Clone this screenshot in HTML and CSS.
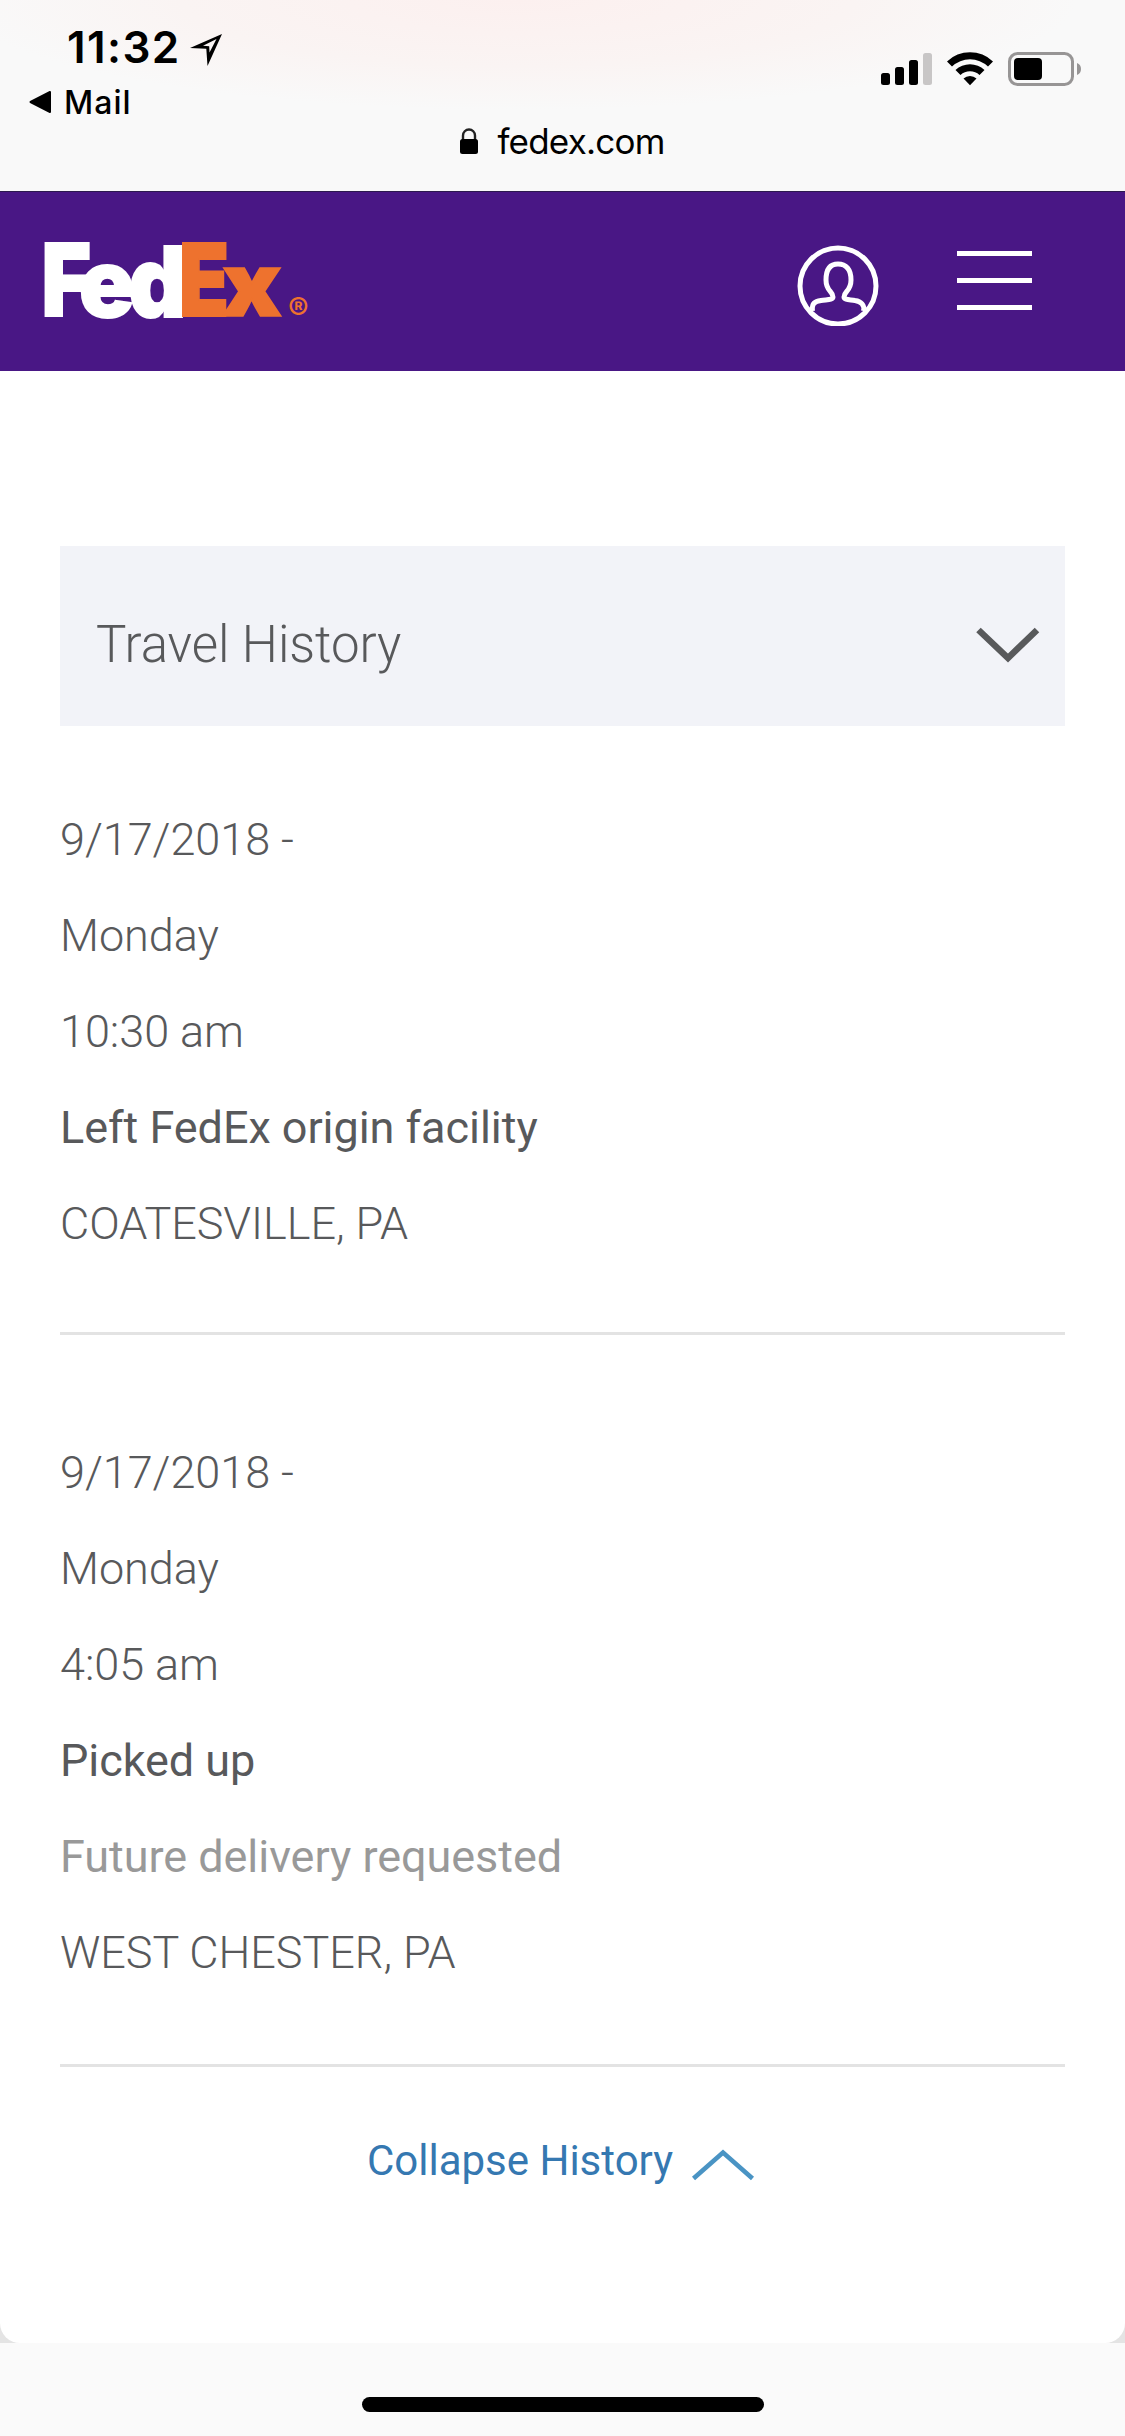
FILE: index.html
```html
<!DOCTYPE html>
<html lang="en">
<head>
    <meta charset="UTF-8">
    <meta name="viewport" content="width=device-width, initial-scale=1.0">
    <title>FedEx Tracking</title>
    <link rel="stylesheet" href="styles.css">
</head>
<body>
    <div class="browser-bar">
        <div class="status-row">
            <div class="status-left">
                <div class="clock">
                    <span class="time">11:32</span>
                    <svg class="location-icon" width="33" height="34" viewBox="0 0 33 34">
                        <path fill="#000" fill-rule="evenodd" d="M32 1 L17.500 33 L16.300 15.800 L0 15 Z M26.500 6 L13 12.700 L19.200 13.300 L19.500 19.500 Z"/>
                    </svg>
                </div>
                <div class="back-app">
                    <svg width="23" height="24" viewBox="0 0 23 24">
                        <path d="M1.500 12 L21 2 V22 Z" stroke="#000" stroke-width="2" stroke-linejoin="round"/>
                    </svg>
                    <span>Mail</span>
                </div>
            </div>
            <div class="status-right">
                <svg width="52" height="34" viewBox="0 0 52 34">
                    <rect x="0" y="21" width="9" height="12" rx="2.500"/>
                    <rect x="14" y="15" width="9" height="18" rx="2.500"/>
                    <rect x="28" y="8" width="9" height="25" rx="2.500"/>
                    <rect x="42" y="1" width="9" height="32" rx="2.500" fill="#c8c6c6"/>
                </svg>
                <svg class="wifi-icon" width="46" height="34" viewBox="0 0 46 34">
                    <path d="M0 9.500 A33 33 0 0 1 46 9.500 L41 14.500 A26 26 0 0 0 5 14.500 Z"/>
                    <path d="M8.500 18 A21 21 0 0 1 37.500 18 L32.500 23 A14 14 0 0 0 13.500 23 Z"/>
                    <path d="M16.500 26.500 A9.500 9.500 0 0 1 29.500 26.500 L23 33.200 Z"/>
                </svg>
                <svg class="battery-icon" width="74" height="34" viewBox="0 0 74 34">
                    <rect x="1.500" y="1.500" width="63" height="31" rx="8" fill="none" stroke="#979595" stroke-width="3"/>
                    <rect x="6" y="6" width="28" height="22" rx="4"/>
                    <path d="M69 11 A6.500 6.500 0 0 1 69 23 Z" fill="#979595"/>
                </svg>
            </div>
        </div>
        <div class="address">
            <svg width="18" height="27" viewBox="0 0 18 27">
                <path d="M3 12 V7.500 A6 6 0 0 1 15 7.500 V12" fill="none" stroke="#222" stroke-width="2.400"/>
                <rect x="0" y="11" width="18" height="15" rx="2.500"/>
            </svg>
            <span>fedex.com</span>
        </div>
    </div>

    <div class="page">
        <div class="header">
            <svg class="logo" width="270" height="84" viewBox="0 0 270 84">
                <g class="logo-fed">
                    <text transform="translate(-3.500 78) scale(0.830 0.980)">F</text>
                    <text transform="translate(34 79) scale(0.900 0.920)">e</text>
                    <text transform="translate(83.500 79) scale(0.880 0.960)">d</text>
                </g>
                <g class="logo-ex">
                    <text transform="translate(134 78) scale(0.800 0.980)">E</text>
                    <text transform="translate(177 78) scale(0.960 0.870)">x</text>
                </g>
                <text class="logo-mark" x="243" y="82">®</text>
            </svg>
            <div class="header-buttons">
                <svg width="82" height="81" viewBox="0 0 82 81">
                    <g fill="none" stroke="#fff" stroke-width="5">
                        <circle cx="41" cy="41" r="38"/>
                        <path d="M15.500 66 C14.500 58 18 56.500 24 55.500 C30 54.500 36 55 36 52 C36 46 29 46.500 29 35 C29 24 33 19 41 19 C49 19 54 24 54 35 C54 46.500 47 46 47 52 C47 55 53 54.500 58 55.500 C64 56.500 68 60 66.500 66"/>
                    </g>
                </svg>
                <div class="menu-button">
                    <span></span>
                    <span></span>
                    <span></span>
                </div>
            </div>
        </div>

        <div class="content">
            <div class="history-header">
                <h2>Travel History</h2>
                <svg width="64" height="36" viewBox="0 0 64 36">
                    <path d="M2.500 3 L32 31 L61 3" fill="none" stroke="#58595b" stroke-width="6.500"/>
                </svg>
            </div>

            <div class="event">
                <p>9/17/2018 -</p>
                <p>Monday</p>
                <p>10:30 am</p>
                <p class="event-status">Left FedEx origin facility</p>
                <p>COATESVILLE, PA</p>
            </div>

            <div class="event event-last">
                <p>9/17/2018 -</p>
                <p>Monday</p>
                <p>4:05 am</p>
                <p class="event-status">Picked up</p>
                <p class="event-note">Future delivery requested</p>
                <p>WEST CHESTER, PA</p>
            </div>

            <div class="collapse-link">
                <span>Collapse History</span>
                <svg width="64" height="34" viewBox="0 0 64 34">
                    <path d="M2.500 30.500 L32 4.500 L61.500 30.500" fill="none" stroke="#4a94c4" stroke-width="4.600"/>
                </svg>
            </div>
        </div>
    </div>

    <div class="bottom-bar">
        <div class="home-indicator"></div>
    </div>
</body>
</html>
```
FILE: styles.css
```css
* {
    margin: 0;
    padding: 0;
    box-sizing: border-box;
}

body {
    display: flex;
    flex-direction: column;
    width: 1125px;
    height: 2436px;
    background-color: #e4e4e4;
    font-family: Roboto, Arial, sans-serif;
    color: #58595b;
}

svg {
    display: block;
    flex-shrink: 0;
}

.browser-bar {
    height: 191px;
    background: radial-gradient(ellipse 560px 110px at 46% 0, #fcf0ef 0%, #faf4f3 60%, #f9f9f9 100%);
    font-family: Inter, Arial, sans-serif;
    color: #000;
}

.status-row {
    display: flex;
    justify-content: space-between;
    height: 120px;
    padding: 20px 43px 0 29px;
}

.clock {
    display: flex;
    align-items: center;
    height: 54px;
    padding-left: 38px;
}

.time {
    width: 123px;
    font-size: 44px;
    font-weight: 600;
    letter-spacing: 1.4px;
    white-space: nowrap;
}

.location-icon {
    margin-top: 6px;
}

.back-app {
    display: flex;
    align-items: center;
    gap: 12px;
    height: 56px;
    font-size: 32px;
    font-weight: 450;
    letter-spacing: 1px;
}

.status-right {
    display: flex;
    align-items: flex-start;
    padding-top: 32px;
}

.wifi-icon {
    margin-left: 14px;
}

.battery-icon {
    margin-left: 15px;
}

.address {
    display: flex;
    align-items: center;
    justify-content: center;
    gap: 19px;
    height: 42px;
    font-size: 35px;
    letter-spacing: -0.8px;
}

.page {
    flex: 1;
    background-color: #fff;
    border-radius: 0 0 20px 20px;
}

.header {
    display: flex;
    justify-content: space-between;
    height: 180px;
    padding: 46px 93px 0 45px;
    background-color: #491785;
    border-top: 1px solid #2c1a4e;
}

.logo {
    overflow: visible;
    font-family: Inter, Arial, sans-serif;
    font-size: 102px;
    font-weight: 900;
}

.logo-fed {
    fill: #fff;
    stroke: #fff;
    stroke-width: 2px;
}

.logo-ex {
    fill: #ee722e;
    stroke: #ee722e;
    stroke-width: 2px;
}

.logo-mark {
    fill: #ee722e;
    font-size: 31px;
    font-weight: 600;
}

.header-buttons {
    display: flex;
    gap: 78px;
    padding-top: 7px;
}

.menu-button {
    display: flex;
    flex-direction: column;
    gap: 22px;
    width: 75px;
    padding-top: 6px;
}

.menu-button span {
    height: 5px;
    background-color: #fff;
}

.content {
    padding: 175px 60px 0;
}

.history-header {
    display: flex;
    align-items: center;
    justify-content: space-between;
    height: 180px;
    padding: 17px 25px 0 36px;
    background-color: #f2f3f8;
}

.history-header h2 {
    font-size: 51px;
    font-weight: 300;
    letter-spacing: -0.05px;
}

.event {
    padding: 66px 0 60px;
    border-bottom: 3px solid #e3e3e3;
    font-size: 45px;
    font-weight: 300;
    line-height: 96px;
    letter-spacing: -0.05px;
}

.event-last {
    padding: 90px 0 63px;
}

.event-status {
    font-weight: 400;
}

.event-note {
    font-weight: 400;
    color: #999;
}

.collapse-link {
    display: flex;
    align-items: flex-start;
    justify-content: center;
    gap: 18px;
    padding: 69px 3px 0 0;
    font-size: 42px;
    color: #3578b1;
}

.collapse-link svg {
    margin-top: 12px;
}

.bottom-bar {
    display: flex;
    justify-content: center;
    height: 93px;
    padding-top: 54px;
    background-color: #fafafa;
}

.home-indicator {
    width: 402px;
    height: 15px;
    border-radius: 8px;
    background-color: #000;
}
```
